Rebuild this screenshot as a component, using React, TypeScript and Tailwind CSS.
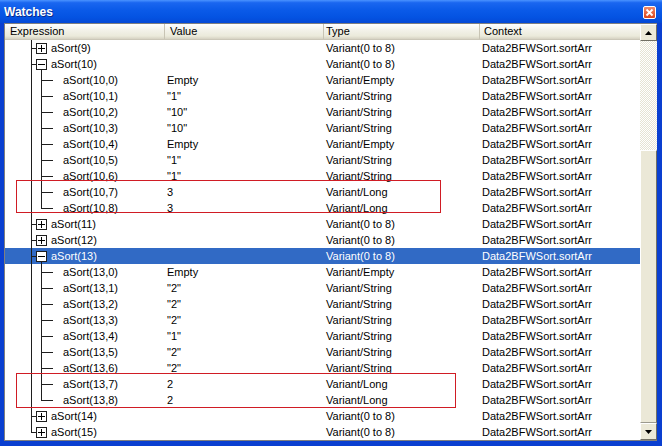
import React from "react";

type Row = {
  exp: string;
  value?: string;
  type: string;
  level: 0 | 1;
  state?: "plus" | "minus";
  lastChild?: boolean;
  lastRoot?: boolean;
  selected?: boolean;
};

const ctx = "Data2BFWSort.sortArr";

const children = (n: number, vals: [string, string][]): Row[] =>
  vals.map(([v, t], i) => ({
    exp: `aSort(${n},${i})`,
    value: v,
    type: t,
    level: 1,
    lastChild: i === vals.length - 1,
  }));

const rows: Row[] = [
  { exp: "aSort(9)", type: "Variant(0 to 8)", level: 0, state: "plus" },
  { exp: "aSort(10)", type: "Variant(0 to 8)", level: 0, state: "minus" },
  ...children(10, [
    ["Empty", "Variant/Empty"],
    ['"1"', "Variant/String"],
    ['"10"', "Variant/String"],
    ['"10"', "Variant/String"],
    ["Empty", "Variant/Empty"],
    ['"1"', "Variant/String"],
    ['"1"', "Variant/String"],
    ["3", "Variant/Long"],
    ["3", "Variant/Long"],
  ]),
  { exp: "aSort(11)", type: "Variant(0 to 8)", level: 0, state: "plus" },
  { exp: "aSort(12)", type: "Variant(0 to 8)", level: 0, state: "plus" },
  { exp: "aSort(13)", type: "Variant(0 to 8)", level: 0, state: "minus", selected: true },
  ...children(13, [
    ["Empty", "Variant/Empty"],
    ['"2"', "Variant/String"],
    ['"2"', "Variant/String"],
    ['"2"', "Variant/String"],
    ['"1"', "Variant/String"],
    ['"2"', "Variant/String"],
    ['"2"', "Variant/String"],
    ["2", "Variant/Long"],
    ["2", "Variant/Long"],
  ]),
  { exp: "aSort(14)", type: "Variant(0 to 8)", level: 0, state: "plus" },
  { exp: "aSort(15)", type: "Variant(0 to 8)", level: 0, state: "plus", lastRoot: true },
];

const LINE = "#1e1e1e";
const BOX = "#1e1e1e";

function Tree({ row }: { row: Row }) {
  return (
    <svg width="60" height="16" className="shrink-0 block" shapeRendering="crispEdges">
      <rect x="26" y="0" width="1" height={row.lastRoot ? 9 : 16} fill={LINE} />
      {row.level === 0 ? (
        <>
          <rect x="27" y="8" width="4" height="1" fill={LINE} />
          <rect x="31" y="3" width="11" height="11" fill="#ffffff" />
          <rect x="31" y="3" width="11" height="1" fill={BOX} />
          <rect x="31" y="13" width="11" height="1" fill={BOX} />
          <rect x="31" y="3" width="1" height="11" fill={BOX} />
          <rect x="41" y="3" width="1" height="11" fill={BOX} />
          <rect x="33" y="8" width="7" height="1" fill="#000000" />
          {row.state === "plus" && <rect x="36" y="5" width="1" height="7" fill="#000000" />}
          {row.state === "minus" && <rect x="36" y="14" width="1" height="2" fill={LINE} />}
        </>
      ) : (
        <>
          <rect x="36" y="0" width="1" height={row.lastChild ? 9 : 16} fill={LINE} />
          <rect x="37" y="8" width="11" height="1" fill={LINE} />
        </>
      )}
    </svg>
  );
}

export default function App() {
  return (
    <div
      className="relative w-[662px] h-[446px] flex flex-col bg-[#0a3fd0] overflow-hidden"
      style={{ fontFamily: '"Liberation Sans", Arial, sans-serif' }}
    >
      {/* title bar */}
      <div className="h-[23px] shrink-0 flex items-center justify-between pl-[4px] pr-[6px] bg-[linear-gradient(to_bottom,#4a93ff_0%,#1a66f0_12%,#0a5ae8_45%,#0453e2_75%,#0448d6_100%)]">
        <span className="text-[12px] font-bold text-white leading-none [text-shadow:1px_1px_0_#0a2a8a]">
          Watches
        </span>
        <div className="w-[13px] h-[13px] rounded-[2px] border border-white bg-[linear-gradient(to_bottom,#f08a6a,#d8461c)] flex items-center justify-center mt-[2px]">
          <svg width="9" height="9" viewBox="0 0 9 9">
            <path d="M1.5 1.5 L7.5 7.5 M7.5 1.5 L1.5 7.5" stroke="#ffffff" strokeWidth="1.8" />
          </svg>
        </div>
      </div>

      {/* body */}
      <div className="flex-1 flex pl-[4px] pr-[5px] pb-[5px]">
        <div className="flex-1 flex border-l border-t border-b border-[#7f7f7f] bg-white">
          {/* list */}
          <div className="w-[635px] flex flex-col text-[11px] text-black">
            {/* header */}
            <div className="h-[16px] flex items-center bg-[linear-gradient(to_bottom,#ffffff_0%,#f3f2ea_40%,#ebeadb_80%,#d6d2c2_100%)] border-b border-[#cbc7b8]">
              <div className="w-[160px] h-full flex items-center pl-[5px] border-r border-[#c8c4b4]">Expression</div>
              <div className="w-[159px] h-full flex items-center pl-[5px] border-r border-[#c8c4b4]">Value</div>
              <div className="w-[156px] h-full flex items-center pl-[2px] border-r border-[#c8c4b4]">Type</div>
              <div className="flex-1 h-full flex items-center pl-[4px]">Context</div>
            </div>
            {/* rows */}
            <div className="flex flex-col">
              {rows.map((r, i) => (
                <div
                  key={i}
                  className={`h-[16px] flex items-center leading-[16px] ${
                    r.selected ? "bg-[#316ac5] text-white" : ""
                  }`}
                >
                  <div className="w-[160px] h-full flex items-center">
                    <div className="w-0 h-full relative">
                      <div className="absolute left-0 top-0">
                        <Tree row={r} />
                      </div>
                    </div>
                    <span className={r.level === 0 ? "pl-[46px]" : "pl-[58px]"}>{r.exp}</span>
                  </div>
                  <div className="w-[159px] pl-[2px] whitespace-pre">{r.value ?? ""}</div>
                  <div className="w-[156px] pl-[2px]">{r.type}</div>
                  <div className="flex-1 pl-[2px]">{ctx}</div>
                </div>
              ))}
            </div>
          </div>

          {/* scrollbar */}
          <div className="w-[17px] flex flex-col">
            <div className="h-[17px] flex items-center justify-center bg-[#ece9d8] border border-t-white border-l-white border-r-[#716f64] border-b-[#716f64]">
              <svg width="7" height="4" viewBox="0 0 7 4">
                <path d="M3.5 0 L7 4 L0 4 Z" fill="#000" />
              </svg>
            </div>
            <div className="h-[109px] bg-[repeating-conic-gradient(#ffffff_0_25%,#e6e3d3_0_50%)] bg-[length:2px_2px]" />
            <div className="flex-1 bg-[#ebe8d7] border border-t-white border-l-white border-r-[#716f64] border-b-[#9c9a8e]" />
            <div className="h-[17px] flex items-center justify-center bg-[#ece9d8] border border-t-white border-l-white border-r-[#716f64] border-b-[#716f64]">
              <svg width="7" height="4" viewBox="0 0 7 4">
                <path d="M0 0 L7 0 L3.5 4 Z" fill="#000" />
              </svg>
            </div>
          </div>
        </div>
      </div>

      {/* red annotation boxes */}
      <div className="absolute left-[16px] top-[180px] w-[425px] h-[33px] border border-[#d01c24]" />
      <div className="absolute left-[16px] top-[373px] w-[440px] h-[35px] border border-[#d01c24]" />
    </div>
  );
}
